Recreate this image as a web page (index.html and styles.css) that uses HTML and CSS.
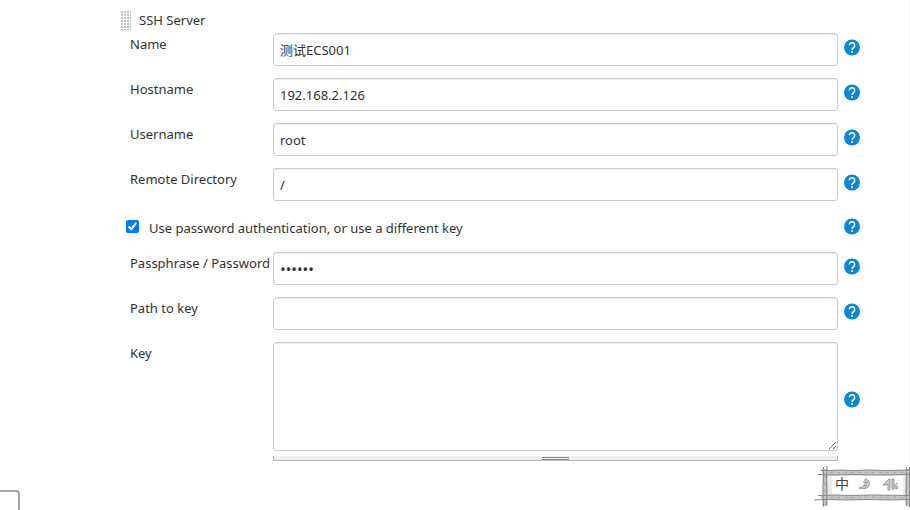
FILE: index.html
```
<!DOCTYPE html>
<html lang="en">

<head>
	<meta charset="utf-8">
	<meta name="viewport" content="width=device-width, initial-scale=1" />
	<title>SSH Server</title>
	<link rel="stylesheet" href="styles.css">
</head>

<body>
	<svg class="defs" width="0" height="0" aria-hidden="true">
		<symbol id="help" viewBox="0 0 24 24">
			<circle cx="12" cy="12" r="12" fill="#0b86d6" />
			<path d="M8 8.800a4 4 0 1 1 6.600 3.100c-1.500 1.200-2.600 1.900-2.600 3.700" fill="none" stroke="#fff" stroke-width="2.300" />
			<rect x="10.700" y="17.500" width="2.600" height="2.600" fill="#fff" />
		</symbol>
	</svg>
	<form class="config">
		<div class="head"><span class="grip"></span>SSH Server</div>
		<div class="row">
			<label for="name">Name</label>
			<input type="text" id="name" name="name" value="测试ECS001" />
			<a class="help" href="#" aria-label="Help for Name"><svg><use href="#help" /></svg></a>
		</div>
		<div class="row">
			<label for="hostname">Hostname</label>
			<input type="text" id="hostname" name="hostname" value="192.168.2.126" />
			<a class="help" href="#" aria-label="Help for Hostname"><svg><use href="#help" /></svg></a>
		</div>
		<div class="row">
			<label for="username">Username</label>
			<input type="text" id="username" name="username" value="root" />
			<a class="help" href="#" aria-label="Help for Username"><svg><use href="#help" /></svg></a>
		</div>
		<div class="row">
			<label for="remote">Remote Directory</label>
			<input type="text" id="remote" name="remote" value="/" />
			<a class="help" href="#" aria-label="Help for Remote Directory"><svg><use href="#help" /></svg></a>
		</div>
		<div class="check">
			<input type="checkbox" id="usepwd" name="usepwd" checked />
			<label for="usepwd">Use password authentication, or use a different key</label>
			<a class="help" href="#" aria-label="Help for password authentication"><svg><use href="#help" /></svg></a>
		</div>
		<div class="row">
			<label for="pwd">Passphrase / Password</label>
			<input type="password" id="pwd" name="pwd" value="secret" />
			<a class="help" href="#" aria-label="Help for Passphrase"><svg><use href="#help" /></svg></a>
		</div>
		<div class="row">
			<label for="keypath">Path to key</label>
			<input type="text" id="keypath" name="keypath" />
			<a class="help" href="#" aria-label="Help for Path to key"><svg><use href="#help" /></svg></a>
		</div>
		<div class="row tall">
			<label for="key">Key</label>
			<div class="area">
				<textarea id="key" name="key"></textarea>
				<div class="handle"></div>
			</div>
			<a class="help" href="#" aria-label="Help for Key"><svg><use href="#help" /></svg></a>
		</div>
	</form>

	<div class="corner"></div>

	<!-- input method bar -->
	<div class="ime">
		<svg class="frame" viewBox="0 0 98 44" fill="none">
			<rect x="14" y="7" width="82" height="25" fill="#ececec" />
			<rect x="20" y="10" width="71" height="19" fill="#fff" />
			<g stroke="#c4c4c4" stroke-width="5">
				<path d="M10 6.500H98M9 31.500H98M13 3V40M96 3V40" />
			</g>
			<g stroke="#8b8b8b">
				<path d="M9 4.500h10l9-.5 15 .5 13-.5 16 .5 26-.5M6 8.500l15 .5 20-.5 22 .5 35-.5M6 29.500l18-.5 15 .5 20-.5 39 .5M2 34l13-.5 20 .5 20-.5 22 .5 21-.5" />
				<path d="M11.500 1v12l-.5 10 .5 18M15 0l-.5 14 .5 12-.5 14M94.500 1v12l-.5 14 .5 13M97.500 1v40" />
			</g>
			<path stroke="#aaa" stroke-dasharray="3 4" d="M18 6.500h75M18 31.500h75M13 9v20" />
		</svg>
		<span class="mode">中</span>
		<svg class="glyphs" viewBox="0 0 48 20" fill="#ccc" stroke="#999">
			<path d="M7 3c5 1 6 5 3 8-2 2-6 2-9 1 3 0 6-2 6-4zM5 6l5 1M5 9l4 1" />
			<path d="M31 3l-6 6h3l2-1v6h2V3zM34 3v10h2v-3l2 3 2-1-2-3h-2V3zM38 7l2 1" />
		</svg>
	</div>
</body>

</html>
```
FILE: styles.css
```
* {
	box-sizing:border-box;
}

body {
	margin:0;
	min-height:100vh;
	border-right:1px solid #f3f3f3;
	background-color:#fff;
	color:#333;
	font:13px/20px "Noto Sans","Noto Sans CJK SC",sans-serif;
}

.defs {
	position:absolute;
}

.config {
	padding:10px 48px 0 120px;
}

.head {
	display:flex;
	gap:8px;
	height:23px;
}

.grip {
	width:11px;
	height:20px;
	background:conic-gradient(from 90deg at 1px 1px,#c2c2be 90deg,transparent 0) 0 0/3px 3px;
}

.row {
	display:grid;
	grid-template-columns:137px 1fr 17px;
	column-gap:6px;
	margin-bottom:12px;
	padding-left:10px;
}

.row label {
	padding-top:1px;
	white-space:nowrap;
}

.row input,
textarea {
	width:100%;
	border:1px solid #ccc;
	border-radius:3px;
	box-shadow:inset 0 1px 1px rgba(0,0,0,.08);
	background-color:#fff;
	color:#333;
	font:inherit;
}

.row input {
	height:33px;
	padding:0 6px;
}

.row input[type=password] {
	font-size:15px;
}

textarea {
	display:block;
	height:109px;
	padding:6px;
}

.help {
	display:block;
	height:17px;
	margin-top:6px;
}

.help svg {
	display:block;
	width:16px;
	height:17px;
}

.tall .help {
	align-self:center;
	margin:0 0 5px;
}

.check {
	display:flex;
	height:27px;
	margin-bottom:12px;
	padding-left:6px;
	align-items:center;
}

.check input {
	width:13px;
	height:13px;
	margin:0 10px 0 0;
}

.check label {
	flex:1;
	padding-top:3px;
}

.check .help {
	width:17px;
	margin:0;
}

.handle {
	height:5px;
	margin-top:5px;
	border:solid #bbb;
	border-width:0 1px 1px;
	background:linear-gradient(#888 1px,#eee 1px,#eee 2px,#888 2px) center bottom/27px 3px no-repeat #eee;
}

.corner {
	position:fixed;
	left:-10px;
	bottom:-10px;
	width:30px;
	height:30px;
	border:2px solid #98a5ad;
	border-radius:4px;
}

.ime {
	position:fixed;
	right:0;
	bottom:0;
	width:98px;
	height:44px;
}

.frame {
	position:absolute;
	width:98px;
	height:44px;
}

.mode {
	position:absolute;
	left:23px;
	top:8px;
	color:#444;
	font-size:14px;
}

.glyphs {
	position:absolute;
	left:46px;
	top:10px;
	width:48px;
	height:20px;
}
```
